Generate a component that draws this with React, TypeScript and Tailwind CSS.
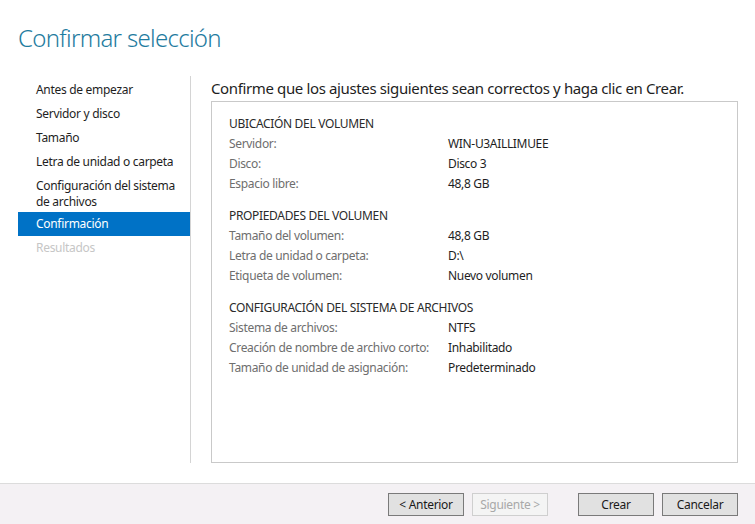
const navItems = [
  { label: "Antes de empezar" },
  { label: "Servidor y disco" },
  { label: "Tamaño" },
  { label: "Letra de unidad o carpeta" },
  { label: "Configuración del sistema de archivos", twoLines: true },
  { label: "Confirmación", active: true },
  { label: "Resultados", disabled: true },
];

const sections = [
  {
    title: "UBICACIÓN DEL VOLUMEN",
    rows: [
      ["Servidor:", "WIN-U3AILLIMUEE"],
      ["Disco:", "Disco 3"],
      ["Espacio libre:", "48,8 GB"],
    ],
  },
  {
    title: "PROPIEDADES DEL VOLUMEN",
    rows: [
      ["Tamaño del volumen:", "48,8 GB"],
      ["Letra de unidad o carpeta:", "D:\\"],
      ["Etiqueta de volumen:", "Nuevo volumen"],
    ],
  },
  {
    title: "CONFIGURACIÓN DEL SISTEMA DE ARCHIVOS",
    rows: [
      ["Sistema de archivos:", "NTFS"],
      ["Creación de nombre de archivo corto:", "Inhabilitado"],
      ["Tamaño de unidad de asignación:", "Predeterminado"],
    ],
  },
];

const WizardButton = (props: { children: React.ReactNode; disabled?: boolean }) => {
  return (
    <button
      className={
        props.disabled
          ? "w-[76px] h-[23px] border border-[#cfcfcf] bg-[#f4f4f4] text-[#a8a8a8] text-[12px] leading-none tracking-[-0.3px]"
          : "w-[76px] h-[23px] border border-[#7a7a7a] bg-[#e1e1e1] text-[#1a1a1a] text-[12px] leading-none tracking-[-0.3px]"
      }
    >
      {props.children}
    </button>
  );
};

export default function App() {
  return (
    <div className="w-[755px] h-[524px] bg-white flex flex-col font-['Noto_Sans',sans-serif] overflow-hidden">
      <div className="h-[76px] pl-[18px] pt-[22px]">
        <h1 className="text-[24px] leading-[32px] font-light text-[#1f7ca0] tracking-[-0.7px]">
          Confirmar selección
        </h1>
      </div>

      <div className="flex h-[387px]">
        <nav className="w-[172px] ml-[18px] pt-[2px] flex flex-col text-[12px] leading-[16px] tracking-[-0.3px]">
          {navItems.map((item) => (
            <div
              key={item.label}
              className={
                item.active
                  ? "bg-[#0072c6] text-white pl-[18px] h-[24px] pt-[4px]"
                  : item.disabled
                  ? "text-[#c6c6c6] pl-[18px] h-[24px] pt-[4px]"
                  : item.twoLines
                  ? "text-[#1e1e1e] pl-[18px] pr-1 pt-[4px] pb-[2px]"
                  : "text-[#1e1e1e] pl-[18px] h-[24px] pt-[4px]"
              }
            >
              {item.label}
            </div>
          ))}
        </nav>

        <div className="w-px bg-[#d4d4d4]" />

        <div className="flex flex-col ml-[20px] w-[527px]">
          <div className="h-[25px] text-[15px] leading-[24px] text-[#1e1e1e] tracking-[-0.37px]">
            Confirme que los ajustes siguientes sean correctos y haga clic en Crear.
          </div>
          <div className="flex-1 border border-[#c9c9c9] pl-[17px] pt-[12px] flex flex-col gap-y-[12px]">
            {sections.map((s) => (
              <div key={s.title} className="text-[12px] leading-[20px] tracking-[-0.33px]">
                <div className="text-[#2a2a2a]">{s.title}</div>
                {s.rows.map(([k, v]) => (
                  <div key={k} className="flex">
                    <div className="w-[219px] text-[#6e6e6e]">{k}</div>
                    <div className="text-[#1e1e1e]">{v}</div>
                  </div>
                ))}
              </div>
            ))}
          </div>
        </div>
      </div>

      <div className="mt-auto h-[41px] border-t border-[#dcdcdc] bg-[#f4f1f4] flex items-center justify-end pr-[17px] pt-[1px]">
        <div className="flex gap-x-[8px]">
          <WizardButton>&lt; Anterior</WizardButton>
          <WizardButton disabled>Siguiente &gt;</WizardButton>
        </div>
        <div className="flex gap-x-[8px] ml-[30px]">
          <WizardButton>Crear</WizardButton>
          <WizardButton>Cancelar</WizardButton>
        </div>
      </div>
    </div>
  );
}
